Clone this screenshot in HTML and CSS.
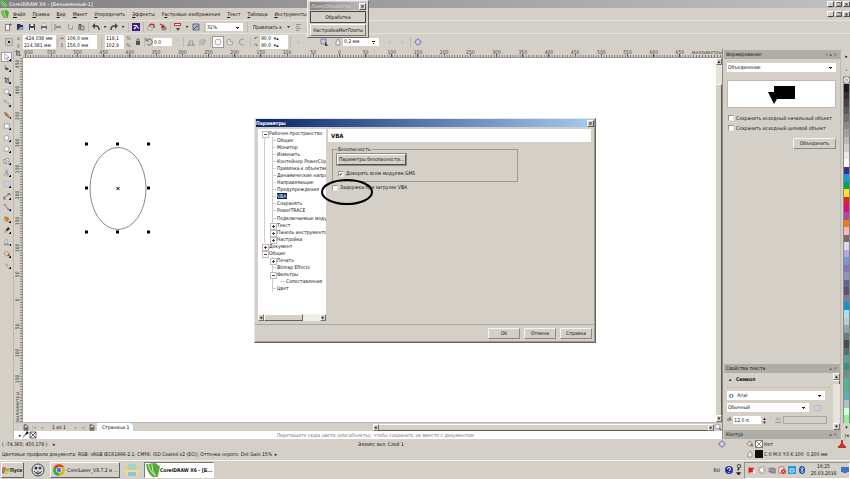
FILE: index.html
```html
<!DOCTYPE html>
<html lang="ru">
<head>
<meta charset="utf-8">
<title>CorelDRAW X6 - [Безымянный-1]</title>
<link rel="stylesheet" href="styles.css">
</head>
<body>
<svg class="sprite" aria-hidden="true">
  <symbol id="corel" viewBox="0 0 12 12"><path d="M0 0h5l7 8v4H6L0 5z" fill="#3f9c35"/><path d="M1 1l9 10M4 1l7 8M1 4l6 7" stroke="#e9f6dc"/></symbol>
  <symbol id="balloon" viewBox="0 0 12 12"><path d="M0 1q1 8 6 11h4l2-9-4-3z" fill="#58a83a"/><path d="M2 1q1 6 6 10M5 1q0 6 3 10" stroke="#e4f3d0" stroke-width=".8" fill="none"/></symbol>
  <symbol id="new" viewBox="0 0 8 8"><path d="M1.500 1.500h4v6h-4z" fill="#fff" stroke="#555" stroke-width=".7"/><path d="M6.500 0v3M5 1.500h3" stroke="#666" stroke-width=".7"/></symbol>
  <symbol id="page" viewBox="0 0 8 8"><path d="M1.500.500h3l2 2v5h-5z" fill="#eee" stroke="#222"/><path d="M4 3v4M2 5h4" stroke="#222"/></symbol>
  <symbol id="open" viewBox="0 0 8 8"><path d="M1 1h3l1 1h2v5H1z" fill="#26324e"/><path d="M2 7l2-3h4L6.500 7z" fill="#8aa0c4"/></symbol>
  <symbol id="save" viewBox="0 0 8 8"><path d="M1 1h6v6H1z" fill="#3b4260"/><path d="M2.500 1h3v2h-3zM2 5h4v2H2z" fill="#e5e8f2"/></symbol>
  <symbol id="print" viewBox="0 0 8 8"><path d="M1 3h6v3H1z" fill="#666"/><path d="M2 1h4v2H2zM2 5h4v2H2z" fill="#f8f8f8" stroke="#888" stroke-width=".4"/></symbol>
  <symbol id="cut" viewBox="0 0 8 8"><path d="M1 1v6M2 3l5 2M2 5l5-2" stroke="#84817b" stroke-width="1" fill="none"/></symbol>
  <symbol id="copy" viewBox="0 0 8 8"><path d="M2.500 1v5h4V3" fill="none" stroke="#9b9892"/></symbol>
  <symbol id="paste" viewBox="0 0 8 8"><path d="M1 2h4v5H1z" fill="#888"/><path d="M4 3h3v4H4z" fill="#ccc" stroke="#444" stroke-width=".6"/><path d="M2 1h2v1H2z" fill="#333"/></symbol>
  <symbol id="undo" viewBox="0 0 8 8"><path d="M2 3h2q3 0 3 4" fill="none" stroke="#454545" stroke-width="1.500"/><path d="M0 3l3-3v6z" fill="#454545"/></symbol>
  <symbol id="redo" viewBox="0 0 8 8"><path d="M6 3H4Q1 3 1 7" fill="none" stroke="#454545" stroke-width="1.500"/><path d="M8 3L5 0v6z" fill="#454545"/></symbol>
  <symbol id="search" viewBox="0 0 8 8"><path d="M0 0h8v8H0z" fill="#3d1c86"/><path d="M1.500 2.500h3l2 3M4 4L2 6" stroke="#fff" stroke-width="1.200" fill="none"/></symbol>
  <symbol id="import" viewBox="0 0 8 8"><path d="M1 4h4v3H1z" fill="#e8e8f0" stroke="#666" stroke-width=".5"/><path d="M2 3q2-3 5-1v3" stroke="#b3272d" fill="none" stroke-width="1.300"/></symbol>
  <symbol id="export" viewBox="0 0 8 8"><path d="M3 4h4v3H3z" fill="#9296a8" stroke="#555" stroke-width=".5"/><path d="M1 1l4 2-1 2M5 3L2 4" stroke="#b3272d" fill="none" stroke-width="1.300"/></symbol>
  <symbol id="launch" viewBox="0 0 8 8"><path d="M0 0h7v3H0z" fill="#c4322c"/><path d="M1 1h5v1H1z" fill="#fff"/><path d="M2 5h4L4 8z" fill="#444"/></symbol>
  <symbol id="welcome" viewBox="0 0 8 8"><path d="M1 1h6v6H1z" fill="#aebed8" stroke="#446" stroke-width=".8"/><path d="M2 6l3-3 1 1" stroke="#446" fill="none"/></symbol>
  <symbol id="list" viewBox="0 0 8 8"><path d="M1 1.500h5M1 3.500h3M1 5.500h5M1 7.500h3" stroke="#8b8882" stroke-width=".8"/></symbol>
  <symbol id="origin" viewBox="0 0 8 8"><path d="M.500.500h7v7h-7z" fill="#c6c4c6" stroke="#889" stroke-width=".6"/><path d="M3 3h2v2H3z" fill="#222"/></symbol>
  <symbol id="lock" viewBox="0 0 8 8"><path d="M2 3h4v4H2z" fill="#555"/><path d="M3 3V1h2v2" fill="none" stroke="#555" stroke-width=".8"/></symbol>
  <symbol id="rotate" viewBox="0 0 8 8"><path d="M2 2a3 3 0 1 1 0 4M1 0v3h3" fill="none" stroke="#555" stroke-width=".8"/></symbol>
  <symbol id="mirror" viewBox="0 0 8 8"><path d="M1 7l2-5v5zM7 7L5 2v5z" fill="#aaa" stroke="#888" stroke-width=".4"/><path d="M0 7.500h8" stroke="#888" stroke-width=".6"/></symbol>
  <symbol id="mirrorv" viewBox="0 0 8 8"><path d="M1 1v7M2 3h5L3 1M2 5h4L3 7" fill="none" stroke="#999" stroke-width=".8"/></symbol>
  <symbol id="circle" viewBox="0 0 8 8"><circle cx="4" cy="4" r="3" fill="#f6f6fb" stroke="#777792" stroke-width=".6"/></symbol>
  <symbol id="pie" viewBox="0 0 8 8"><path d="M4 4h3a3 3 0 1 1-3-3z" fill="#e9e9f2" stroke="#777792" stroke-width=".6"/></symbol>
  <symbol id="arc" viewBox="0 0 8 8"><path d="M6 1.500a3 3 0 1 0 0 5" fill="none" stroke="#8888a0" stroke-width=".8"/></symbol>
  <symbol id="wrap" viewBox="0 0 8 8"><path d="M1 1h5v5H1z" fill="#c9cbe0" stroke="#667" stroke-width=".7"/><path d="M3 6h3M5 3l3 5H5z" fill="#444"/></symbol>
  <symbol id="pen" viewBox="0 0 8 8"><path d="M2 7V4l2-3 2 3v3z" fill="#eee" stroke="#777" stroke-width=".7"/></symbol>
  <symbol id="gear" viewBox="0 0 8 8"><circle cx="4" cy="4" r="2.500" fill="#d8d6e6" stroke="#8f8ab4" stroke-width="1.200"/><path d="M4 0v2M4 6v2M0 4h2M6 4h2" stroke="#8f8ab4"/></symbol>
  <symbol id="dim" viewBox="0 0 8 8"><path d="M2 4h4M4 2v4" stroke="#c3c0b9" stroke-width="1.200"/></symbol>
  <symbol id="t-pick" viewBox="0 0 9 9"><path d="M2 1l5 4H5l1 3-1 .500L4 6 2 7z" fill="#fff" stroke="#667" stroke-width=".6"/></symbol>
  <symbol id="t-shape" viewBox="0 0 9 9"><path d="M2 1q2 3 1 6" stroke="#777" fill="none" stroke-width=".8"/><path d="M3 3l4 3-3 1z" fill="#333"/><path d="M2 4h2v2H2z" fill="#668"/></symbol>
  <symbol id="t-crop" viewBox="0 0 9 9"><path d="M3 1v6h5M1 3h5v5M2 7l5-5" fill="none" stroke="#4b4b52" stroke-width=".8"/></symbol>
  <symbol id="t-zoom" viewBox="0 0 9 9"><path d="M5 5l3 3" stroke="#555" stroke-width="1.400"/><circle cx="4" cy="4" r="2.800" fill="#eef2fc" stroke="#77798c" stroke-width=".7"/></symbol>
  <symbol id="t-free" viewBox="0 0 9 9"><path d="M2 1q-1 3 2 3t3 3" fill="none" stroke="#888" stroke-width=".8"/><path d="M1 1h2v1H1zM6 7h2v1H6z" fill="#888"/></symbol>
  <symbol id="t-brush" viewBox="0 0 9 9"><path d="M1 1q4 0 7 6l-2 1Q4 4 1 3z" fill="#b58366"/><path d="M4 2v4M2 4l5 3" stroke="#765" stroke-width=".8"/></symbol>
  <symbol id="t-rect" viewBox="0 0 9 9"><path d="M1.500 2h5.500v5H1.500z" fill="#fafaff" stroke="#77798c" stroke-width=".7"/></symbol>
  <symbol id="t-ell" viewBox="0 0 9 9"><circle cx="4" cy="4.500" r="2.800" fill="#fafaff" stroke="#77798c" stroke-width=".7"/></symbol>
  <symbol id="t-poly" viewBox="0 0 9 9"><path d="M1 3.500L4 1l3 2.500L6 7H2z" fill="#fafaff" stroke="#77798c" stroke-width=".7"/></symbol>
  <symbol id="t-basic" viewBox="0 0 9 9"><path d="M1 3h3v4H1z" fill="#eee" stroke="#667" stroke-width=".7"/><circle cx="5" cy="3.500" r="2" fill="#f8f8ff" stroke="#667" stroke-width=".7"/><path d="M3 7l2-3 2 3z" fill="#fff" stroke="#667" stroke-width=".6"/></symbol>
  <symbol id="t-text" viewBox="0 0 9 9"><path d="M1 8l3-7 3 7M4 1l1 7M2.500 5.500h3" fill="none" stroke="#888a99" stroke-width=".7"/></symbol>
  <symbol id="t-table" viewBox="0 0 9 9"><path d="M1 2h7v5H1zM1 4.500h7M3.500 2v5M5.800 2v5" fill="#fff" stroke="#8688a0" stroke-width=".6"/></symbol>
  <symbol id="t-dim" viewBox="0 0 9 9"><path d="M1 7l6-5M1 5v3h2M5 2h3v2" fill="none" stroke="#555" stroke-width=".9"/></symbol>
  <symbol id="t-conn" viewBox="0 0 9 9"><path d="M2 2l4 5" stroke="#666" stroke-width=".8"/><path d="M1 1h2v2H1zM5 6h2v2H5z" fill="#889"/></symbol>
  <symbol id="t-blend" viewBox="0 0 9 9"><path d="M1 2l3-1 3 3v4H4L1 6z" fill="#dd9b5c"/><path d="M2 3l4 1-2 3" fill="none" stroke="#8c4f23" stroke-width=".8"/></symbol>
  <symbol id="t-drop" viewBox="0 0 9 9"><path d="M1 8l1-3 2-1 1 1-1 2z" fill="#e29146"/><path d="M3 4l3-3 2 2-3 3z" fill="#4b3328"/></symbol>
  <symbol id="dropper" viewBox="0 0 8 8"><path d="M1 7l1-2 2-2 1 1-2 2z" fill="#999"/><path d="M4 3l2-3 2 2-3 2z" fill="#222"/></symbol>
  <symbol id="t-out" viewBox="0 0 9 9"><path d="M2 6V4l2-3 1 3v2z" fill="#e8e8f0" stroke="#778" stroke-width=".6"/><path d="M1 7.500h7" stroke="#778"/></symbol>
  <symbol id="t-fill" viewBox="0 0 9 9"><path d="M1 4l3-3 3 3-3 3z" fill="#d8d3cc" stroke="#665" stroke-width=".7"/><path d="M6 4q3 1 1 4L5 6z" fill="#b9542d"/></symbol>
  <symbol id="t-ifill" viewBox="0 0 9 9"><path d="M1 3l3-2 2 3-2 3z" fill="#e6c28d"/><path d="M3 3l3 4" stroke="#776" stroke-width=".8"/></symbol>
</svg>

<div class="app">
  <header class="titlebar">
    <svg class="i8"><use href="#corel"/></svg>
    <h1>CorelDRAW X6 - [Безымянный-1]</h1>
    <div class="winbtns"><button aria-label="Свернуть">_</button><button aria-label="Восстановить">❐</button><button aria-label="Закрыть">×</button></div>
  </header>
  <nav class="menubar">
    <svg class="i8"><use href="#balloon"/></svg>
    <a href="#"><u>Ф</u>айл</a><a href="#"><u>П</u>равка</a><a href="#"><u>В</u>ид</a><a href="#"><u>М</u>акет</a><a href="#"><u>У</u>порядочить</a><a href="#"><u>Э</u>ффекты</a><a href="#">Р<u>а</u>стровые изображения</a><a href="#"><u>Т</u>екст</a><a href="#"><u>Т</u>аблица</a><a href="#"><u>И</u>нструменты</a>
    <div class="winbtns"><button aria-label="Свернуть документ">_</button><button aria-label="Восстановить документ">❐</button><button aria-label="Закрыть документ">×</button></div>
  </nav>
  <div class="bar std">
    <button aria-label="Создать"><svg><use href="#new"/></svg></button>
    <button aria-label="Открыть"><svg><use href="#open"/></svg></button>
    <button aria-label="Сохранить"><svg><use href="#save"/></svg></button>
    <button aria-label="Печать"><svg><use href="#print"/></svg></button>
    <i class="sep"></i>
    <button aria-label="Вырезать"><svg><use href="#cut"/></svg></button>
    <button aria-label="Копировать"><svg><use href="#copy"/></svg></button>
    <button aria-label="Вставить"><svg><use href="#paste"/></svg></button>
    <i class="sep"></i>
    <button aria-label="Отменить"><svg><use href="#undo"/></svg></button><i class="dd"></i>
    <button aria-label="Повторить"><svg><use href="#redo"/></svg></button><i class="dd"></i>
    <i class="sep"></i>
    <button aria-label="Поиск содержимого"><svg><use href="#search"/></svg></button>
    <i class="sep"></i>
    <button aria-label="Импорт"><svg><use href="#import"/></svg></button>
    <button aria-label="Экспорт"><svg><use href="#export"/></svg></button>
    <i class="sep"></i>
    <button aria-label="Запуск приложений"><svg><use href="#launch"/></svg></button><i class="dd"></i>
    <button aria-label="Экран приветствия"><svg><use href="#welcome"/></svg></button>
    <i class="sep"></i>
    <select aria-label="Масштаб"><option>31%</option></select>
    <i class="sep"></i>
    <button>Привязать к</button><i class="dd"></i>
    <button aria-label="Параметры"><svg><use href="#list"/></svg></button>
  </div>
  <div class="bar prop">
    <button aria-label="Начало координат"><svg><use href="#origin"/></svg></button>
    <div class="pair"><label for="px">x:</label><input id="px" value="-424,038 мм"><label for="py">y:</label><input id="py" value="214,381 мм"></div>
    <i class="sep"></i>
    <div class="pair"><label for="pw">↔</label><input id="pw" value="106,0 мм"><label for="ph">↕</label><input id="ph" value="156,0 мм"></div>
    <i class="sep"></i>
    <div class="pair after"><input id="sx" value="118,1"><label for="sx">%</label><input id="sy" value="102,9"><label for="sy">%</label></div>
    <button aria-label="Сохранять пропорции"><svg><use href="#lock"/></svg></button>
    <i class="sep"></i>
    <svg><use href="#rotate"/></svg><input aria-label="Угол поворота" value="0,0"><span class="muted">°</span>
    <i class="sep"></i>
    <button aria-label="Отразить по горизонтали"><svg><use href="#mirror"/></svg></button>
    <button aria-label="Отразить по вертикали"><svg><use href="#mirrorv"/></svg></button>
    <i class="sep"></i>
    <button class="pressed" aria-label="Эллипс"><svg><use href="#circle"/></svg></button>
    <button aria-label="Сектор"><svg><use href="#pie"/></svg></button>
    <button aria-label="Дуга"><svg><use href="#arc"/></svg></button>
    <i class="sep"></i>
    <div class="pair"><label for="a1">↶</label><input id="a1" value="90,0  ▾▴"><label for="a2">↷</label><input id="a2" value="90,0  ▾▴"></div>
    <i class="sep"></i>
    <svg><use href="#dim"/></svg><span></span>
    <button aria-label="Обтекание текстом"><svg><use href="#wrap"/></svg></button><span></span>
    <svg><use href="#pen"/></svg>
    <select aria-label="Толщина абриса"><option>0,2 мм</option></select><span></span>
    <svg><use href="#dim"/></svg><svg><use href="#dim"/></svg>
    <i class="sep"></i>
    <button aria-label="Преобразовать в кривую"><svg><use href="#gear"/></svg></button>
  </div>

  <main class="main">
    <aside class="toolbox"><div class="tools" id="tools"></div></aside>
    <section class="doc">
      <div class="corner"><svg class="i8"><use href="#t-crop"/></svg></div>
      <div class="hruler"><div class="hcells" id="hcells"></div><span>миллиметры</span></div>
      <div class="vruler"><div class="vcells" id="vcells"></div><span>миллиметры</span></div>
      <div class="canvas">
        <svg class="drawing" width="132" height="200" viewBox="23 58 132 200">
          <ellipse cx="118" cy="188.500" rx="28" ry="41" fill="none" stroke="#555" stroke-width=".7"/>
          <path d="M85 142.500h3v3h-3zM116 142.500h3v3h-3zM147 142.500h3v3h-3zM85 186.500h3v3h-3zM147 186.500h3v3h-3zM85 230.500h3v3h-3zM116 230.500h3v3h-3zM147 230.500h3v3h-3z"/>
          <path d="M116.500 187l3 3m0-3l-3 3" stroke="#000"/>
        </svg>
      </div>
      <div class="vscroll"><button aria-label="Вверх">▴</button><i></i><b></b><button aria-label="Вниз">▾</button></div>
      <div class="pagebar">
        <button aria-label="Добавить страницу в начало"><svg><use href="#page"/></svg></button><button class="muted" aria-label="Первая">|◂</button><button class="muted" aria-label="Предыдущая">◂</button>
        <span>1 из 1</span>
        <button class="muted" aria-label="Следующая">▸</button><button class="muted" aria-label="Последняя">▸|</button><button aria-label="Добавить страницу в конец"><svg><use href="#page"/></svg></button>
        <a class="tab" href="#">Страница 1</a>
        <div class="hscroll"><button aria-label="Влево">◂</button><b></b><button aria-label="Вправо">▸</button><svg class="i8"><use href="#t-zoom"/></svg></div>
      </div>
      <div class="docpalette"><span>▸</span><svg class="i8"><use href="#dropper"/></svg><svg class="i8" viewBox="0 0 8 8"><path d="M1 1h6v6H1zM1 1l6 6M7 1L1 7" fill="none" stroke="#222" stroke-width=".7"/></svg><p>Перетащите сюда цвета (или объекты), чтобы сохранить их вместе с документом</p></div>
    </section>
    <aside class="docker">
      <h2>Формирование <span>» ▴ ×</span></h2>
      <div class="shaping">
        <select aria-label="Операция"><option>Объединение</option></select>
        <div class="preview"><svg width="28" height="20" viewBox="0 0 28 20"><path d="M6 2h21v13H9l-3 5-6-12h6z"/></svg></div>
        <label><input type="checkbox">Сохранить исходный начальный объект</label>
        <label><input type="checkbox">Сохранить исходный целевой объект</label>
        <button class="btn">Объединить</button>
      </div>
      <h2>Свойства текста <span>▴ ×</span></h2>
      <div class="textprops">
        <div class="fields">
          <h3>▴ &nbsp; Символ</h3>
          <div class="font"><em>O</em><select aria-label="Шрифт"><option>Arial</option></select></div>
          <div class="row"><select aria-label="Начертание"><option>Обычный</option></select><svg class="i8"><use href="#t-table"/></svg></div>
          <div class="row size"><label for="fs">ıA</label><input id="fs" value="12,0 п."><span class="spin">▴▾</span><label for="kern" class="muted kern">AV</label><input id="kern" class="off" value="" disabled></div>
        </div>
        <div class="vscroll small"><button aria-label="Вверх">▴</button><b></b><i></i><button aria-label="Вниз">▾</button></div>
      </div>
      <h2>Контур <span>▴ ×</span></h2>
    </aside>
    <aside class="palette">
      <button aria-label="Меню палитры">▸</button><button class="muted" aria-label="Прокрутить вверх">▴</button>
      <svg viewBox="0 0 8 8"><path d="M.500.500h7v7h-7zM1 1l6 6M7 1L1 7" fill="#fff" stroke="#333" stroke-width=".6"/></svg>
      <div class="swatches" id="swatches"></div>
      <button aria-label="Прокрутить вниз">▾</button><button aria-label="Развернуть">|◂</button>
    </aside>
  </main>

  <footer class="status">
    <span>( -74,365; 450,178 ) &nbsp; &nbsp;▸</span>
    <span>Эллипс вкл. Слой 1</span>
    <svg class="i8"><use href="#gear"/></svg>
    <div class="paint"><svg class="i8"><use href="#t-fill"/></svg><svg class="i8" viewBox="0 0 8 8"><path d="M.500.500h7v7h-7zM1 1l6 6M7 1L1 7" fill="#fff" stroke="#333" stroke-width=".6"/></svg><span>Нет</span></div>
    <svg class="i8 alert" viewBox="0 0 8 8"><path d="M3 0h2v3l2 3H1l2-3zM0 6h8v2H0z" fill="#c2332f"/></svg>
    <span class="profiles">Цветовые профили документа: RGB: sRGB IEC61966-2.1; CMYK: ISO Coated v2 (ECI); Оттенки серого: Dot Gain 15% &nbsp;▸</span>
    <div class="paint second"><svg class="i8"><use href="#pen"/></svg><i class="ink"></i><span>C:0 M:0 Y:0 K:100 &nbsp;0,200 мм</span></div>
  </footer>

  <footer class="taskbar">
    <button class="start"><svg class="i8" viewBox="0 0 8 8"><path d="M0 2q2-2 4 0l-1 3Q2 4 0 5z" fill="#e0623a"/><path d="M4 2q2 1 4 0L7 5Q5 6 3 5z" fill="#8cb93d"/><path d="M0 5q2-1 3 0L2 8Q1 7 0 7z" fill="#4d7fd0"/><path d="M3 5q2 1 4 0L6 8Q4 9 2 8z" fill="#e8c23a"/></svg>Пуск</button>
    <svg class="i14" viewBox="0 0 14 14"><circle cx="7" cy="7" r="6" fill="#d8dce0" stroke="#444"/><circle cx="5" cy="5" r="1.500" fill="#333"/><circle cx="9" cy="5" r="1.500" fill="#444"/><path d="M3 8q4 5 8 0M5 9v2M7 8v4M9 9v2" stroke="#333" stroke-width=".8" fill="none"/></svg>
    <button class="task"><svg class="i12" viewBox="0 0 12 12"><circle cx="6" cy="6" r="6" fill="#e2b422"/><path d="M1 3a6 6 0 0 1 10 0H6L4 7z" fill="#d93f2f"/><path d="M1 3a6 6 0 0 0 4 9l3-5H4z" fill="#3ba755"/><circle cx="6" cy="6" r="2.800" fill="#fff"/><circle cx="6" cy="6" r="2.200" fill="#3f79d8"/></svg>CorelLaser_V8.7.2 и ...</button>
    <svg class="i14" viewBox="0 0 14 14"><path d="M1 2h4l1 1h7v10H1z" fill="#ecd070"/><path d="M3 1h8v7H3z" fill="#a9d0c4"/><path d="M1 7h12v6H1z" fill="#f1dc8a"/><path d="M3 9h8v4H3z" fill="#8cc4dc"/></svg>
    <button class="task active"><svg class="i14"><use href="#balloon"/></svg>CorelDRAW X6 - [Б...</button>
    <div class="lang">RU</div>
    <svg class="i8 help" viewBox="0 0 8 8"><circle cx="4" cy="4" r="4" fill="#2634a8"/><path d="M2.500 3q0-1.500 1.500-1.500T5.500 3 4 4.800M4 6v1" stroke="#fff" fill="none"/></svg>
    <svg class="i8 mini" viewBox="0 0 8 14"><circle cx="4" cy="2.500" r="2" fill="none" stroke="#333"/><path d="M4 4v3H2M1 10h5l-2.500 3z" stroke="#333" stroke-width=".6"/></svg>
    <div class="tray">
      <svg class="i8" viewBox="0 0 8 8"><path d="M1 1v7M1 2h5L4 4l2 2H1z" fill="#d22" stroke="#d22" stroke-width=".6"/><path d="M5 5h2v2H5z" fill="#fff"/></svg>
      <svg class="i8" viewBox="0 0 8 8"><circle cx="4" cy="4" r="3.500" fill="#c8c6c2" stroke="#aaa"/><path d="M2 3h1l2-2v6L3 5H2z" fill="#fff"/></svg>
      <svg class="i8" viewBox="0 0 8 8"><path d="M1 2h5v4H1zM3 3h5v4H3z" fill="#aab" stroke="#667" stroke-width=".6"/></svg>
      <svg class="i8" viewBox="0 0 8 8"><path d="M1 1h5v6H1z" fill="#eee" stroke="#b55" stroke-width=".7"/><circle cx="5.500" cy="5.500" r="2.500" fill="#d8342a"/><path d="M4.500 4.500l2 2m0-2l-2 2" stroke="#fff" stroke-width=".7"/></svg>
      <svg class="i8" viewBox="0 0 8 8"><path d="M0 0h8v8H0z" fill="#2b98d8"/><path d="M2 3h4v3H2z" fill="none" stroke="#d8f0ff"/></svg>
      <svg class="i8" viewBox="0 0 8 8"><ellipse cx="4" cy="4" rx="3" ry="4" fill="#1650a8"/><path d="M2.500 2.500l3 3L4 7V1l1.500 1.500-3 3" stroke="#fff" fill="none" stroke-width=".6"/></svg>
      <time>16:25<br>25.03.2016</time>
      <svg class="i8" viewBox="0 0 8 8"><path d="M0 1h8v5H0zM2 6h4v1H2z" fill="#3f74c8"/></svg>
    </div>
  </footer>
</div>

<section class="macro" aria-label="Макросы">
  <header>ЛазерОбработка<button aria-label="Закрыть">×</button></header>
  <button class="default">Обработка</button>
  <button>НастройкаМатПлаты</button>
</section>

<section class="dialog" role="dialog" aria-label="Параметры">
  <header>Параметры<button aria-label="Закрыть">×</button></header>
  <div class="dlgbody">
    <nav class="treepane">
      <ul class="tree">
        <li class="l0 open">Рабочее пространство</li>
        <li>Общие</li><li>Монитор</li><li>Изменить</li><li>Контейнер PowerClip</li><li>Привязка к объектам</li><li>Динамические направляющие</li><li>Направляющие</li><li>Предупреждения</li>
        <li><mark>VBA</mark></li><li>Сохранять</li><li>PowerTRACE</li><li>Подключаемые модули</li>
        <li class="closed">Текст</li><li class="closed">Панель инструментов</li><li class="closed">Настройка</li>
        <li class="l0 closed">Документ</li>
        <li class="l0 open">Общие</li>
        <li class="closed tail">Печать</li><li class="tail">Bitmap Effects</li><li class="open tail">Фильтры</li><li class="l2 tail">Сопоставления</li><li class="tail">Цвет</li>
      </ul>
      <div class="treescroll"><button aria-label="Влево">◂</button><b></b><i></i><button aria-label="Вправо">▸</button></div>
    </nav>
    <div class="pane">
      <h2>VBA</h2>
      <fieldset>
        <legend>Безопасность</legend>
        <button class="btn strong">Параметры безопасности...</button>
        <label><input type="checkbox" checked>Доверять всем модулям GMS</label>
      </fieldset>
      <label class="delay"><input type="checkbox">Задержка при загрузке VBA</label>
    </div>
  </div>
  <footer><button class="btn">OK</button><button class="btn">Отмена</button><button class="btn">Справка</button></footer>
  <svg class="mark" width="54" height="28" viewBox="0 0 54 28" aria-hidden="true"><ellipse cx="27" cy="14" rx="25" ry="12" fill="none" stroke="#000" stroke-width="2"/></svg>
</section>
<script src="script.js"></script>
</body>
</html>
```
FILE: styles.css
```css
:root {
  --face: #d4d0c8;
  --shade: #8c8982;
  --light: #f6f4ef;
  --head: #b0ada6;
  --line: linear-gradient(#ccc, #ccc);
}
* { box-sizing: border-box; margin: 0; padding: 0; }
html, body { height: 100%; overflow: hidden; }
body {
  position: relative;
  font: 5px/7px "DejaVu Sans Condensed", "DejaVu Sans", sans-serif;
  color: #111;
  background: var(--face);
}
button, input, select { font: inherit; color: inherit; border: 0; background: none; border-radius: 0; min-width: 0; appearance: none; white-space: nowrap; }
h1, h2, h3 { font: inherit; }
a { color: inherit; text-decoration: none; }
svg { display: block; flex: none; }
i { font-style: normal; }
.sprite { position: absolute; width: 0; height: 0; }
.i8 { width: 8px; height: 8px; }
.i12 { width: 12px; height: 12px; }
.i14 { width: 14px; height: 14px; }
.muted, button.muted { color: #9b978f; }

.app { height: 100%; display: flex; flex-direction: column; }

.titlebar { display: flex; align-items: center; height: 8px; gap: 1px; color: #d9d9d9; background: linear-gradient(90deg, #808080, #c0c0c0); }
.titlebar h1 { font-weight: bold; }
.winbtns { display: flex; margin-left: auto; gap: 1px; }
.winbtns button { width: 7px; height: 6px; line-height: 5px; color: #000; background: var(--face); border: 1px solid; border-color: #fff #555 #555 #fff; display: grid; place-items: center; font-weight: bold; }

.menubar { display: flex; align-items: center; height: 12px; gap: 7px; padding-left: 1px; }
.menubar a:first-of-type { margin-left: -3px; }

.bar { display: grid; align-items: center; padding-left: 2px; border-top: 1px solid #e6e3dc; }
.bar > * { justify-self: center; }
.bar svg { width: 8px; height: 8px; }
.bar input, .bar select { justify-self: stretch; height: 8px; background: #fff; padding-left: 1px; width: 100%; }
.bar select, .docker select {
  background: linear-gradient(#222, #222) right 4px center / 3px 1px no-repeat, linear-gradient(#222, #222) right 5px top 5px / 1px 1px no-repeat, #fff;
}
.std { height: 13px; grid-template-columns: 12px 12px 12px 12px 2px 12px 12px 10px 4px 12px 6px 12px 6px 4px 12px 3px 12px 12px 3px 12px 6px 12px 4px 37px 8px 33px 9px 11px; }
.prop { height: 16px; grid-template-columns: 13px 41px 2px 39px 8px 28px 10px 2px 8px 19px 10px 3px 12px 12px 2px 13px 12px 12px 4px 36px 4px 12px 14px 12px 3px 10px 36px 5px 12px 12px 4px 12px; }
.sep { width: 1px; height: 10px; background: #bdb9b1; }
.dd { width: 3px; height: 2px; background: #333; clip-path: polygon(0 0, 100% 0, 50% 100%); }
.pair { justify-self: stretch; display: grid; grid-template-columns: 8px 1fr; grid-auto-rows: 7px; }
.pair.after { grid-template-columns: 1fr 9px; }
.pair label { justify-content: center; color: #555; }
.bar .pair input { height: 7px; }
.pressed { padding: 1px; background: #fff; border: 1px solid #999; }

.main { flex: 1; min-height: 0; display: grid; grid-template-columns: 14px 1fr 118px 9px; }
.toolbox { border-right: 1px solid #bcb8b0; padding-top: 2px; }
.tools { display: grid; grid-auto-rows: 1fr; height: 220px; justify-items: center; align-items: center; }
.tools button { width: 11px; height: 10px; padding-left: 1px; border: 1px solid transparent; background: linear-gradient(135deg, transparent 50%, #111 50%) right bottom / 2px 2px no-repeat; }
.tools button.active { background-color: #fff; border-color: #999; }
.tools svg { width: 8px; height: 8px; }

.doc { display: grid; grid-template-columns: 9px 1fr 6px; grid-template-rows: 9px 1fr 9px 8px; min-width: 0; min-height: 0; border-right: 1px solid #8b8882; }
.hruler { grid-column: 2 / 4; display: flex; overflow: hidden; border-bottom: 1px solid #99958d; color: #444; }
.hcells { display: grid; grid-template-columns: repeat(26, 1fr); flex: 1; margin-left: -11px; }
.hcells span { text-align: center; line-height: 6px; background: linear-gradient(90deg, #77746e 1px, transparent 1px) 0 100% / 10% 2px repeat-x, linear-gradient(#55524d, #55524d) 50% 100% / 1px 3px no-repeat; }
.hcells span:first-child { padding-left: 7px; }
.hruler > span { width: 29px; text-align: right; line-height: 6px; background: linear-gradient(90deg, #77746e 1px, transparent 1px) 0 100% / 3px 2px repeat-x; direction: rtl; }
.vruler { display: flex; flex-direction: column; overflow: hidden; border-right: 1px solid #99958d; color: #444; }
.vcells { display: grid; grid-template-rows: repeat(13, 1fr); height: 341px; flex: none; margin-top: -7px; }
.vcells span, .vruler > span { writing-mode: vertical-rl; transform: rotate(180deg); text-align: center; line-height: 6px; width: 8px; padding-left: 2px; background: linear-gradient(#77746e 1px, transparent 1px) 0 0 / 2px 10% repeat-y; }
.vruler > span { flex: 1; text-align: left; }
.canvas { background: #fff; overflow: hidden; }

.vscroll { display: flex; flex-direction: column; background: #e6e3dc; }
.vscroll button, .hscroll button, .treescroll button { width: 6px; height: 7px; line-height: 5px; flex: none; color: #000; background: var(--face); border: 1px solid; border-color: #fff #77746e #77746e #fff; display: grid; place-items: center; }
.vscroll i { height: 19px; }
.vscroll b { flex: 1; background: var(--face); border-right: 1px solid #5c5953; border-top: 1px solid #fff; }
.pagebar { grid-column: 1 / 4; display: flex; align-items: center; padding-left: 9px; gap: 2px; border-top: 1px solid #bcb8b0; }
.pagebar > button { width: 6px; }
.pagebar > button svg { width: 6px; height: 7px; }
.pagebar > span { padding: 0 5px; }
.tab { align-self: stretch; background: #fff; padding: 0 4px 0 5px; line-height: 8px; border-top-right-radius: 4px; }
.hscroll { width: 50%; margin-left: auto; display: flex; align-items: center; }
.hscroll b { flex: 1; height: 7px; border-bottom: 1px solid #5c5953; border-top: 1px solid #fff; }
.docpalette { grid-column: 1 / 4; background: #fff; display: flex; align-items: center; padding: 0 9px 0 5px; }
.docpalette p { flex: 1; text-align: center; font-style: italic; color: #777; }

.docker { display: flex; flex-direction: column; padding: 1px 0 0 1px; border-right: 1px solid #bcb8b0; }
.docker h2 { display: flex; height: 9px; align-items: center; padding: 0 3px 0 2px; background: var(--head); flex: none; }
.docker h2 span { margin-left: auto; display: block; white-space: pre; color: #555; }
.docker select { height: 9px; padding-left: 1px; width: 100%; }
.shaping { flex: 1; display: flex; flex-direction: column; padding: 4px 4px 0 3px; }
.preview { height: 28px; margin: 8px 0 5px; background: #fff; border: 1px solid #bcb8b0; display: grid; place-items: center; }
label { display: flex; align-items: center; }
input[type="checkbox"] { width: 6px; height: 6px; background: #fff; border: 1px solid; border-color: #96928a #e8e5de #e8e5de #96928a; flex: none; display: grid; place-items: center; }
input[type="checkbox"]:checked::after { content: "✔"; font-size: 5px; line-height: 5px; color: #000; }
.shaping label { height: 10px; gap: 2px; padding-left: 1px; white-space: nowrap; }
.btn { height: 11px; padding: 0 4px; background: var(--face); border: 1px solid; border-color: var(--light) var(--shade) var(--shade) var(--light); text-align: center; }
.shaping .btn { width: 43px; align-self: flex-end; margin-top: 5px; }
.textprops { display: flex; height: 57px; }
.fields { flex: 1; padding: 3px 2px 0 3px; display: flex; flex-direction: column; gap: 3px; min-width: 0; }
.fields h3 { font-weight: bold; height: 12px; padding-left: 2px; border-bottom: 1px solid #c4c0b8; }
.font { display: flex; align-items: center; height: 9px; background: #fff; margin-right: 6px; }
.font em { padding: 0 3px 0 2px; font: italic bold 6px/8px "Liberation Serif", serif; color: #124c6e; }
.row { display: flex; align-items: center; height: 9px; gap: 5px; padding-right: 4px; }
.row select { width: 82px; flex: none; }
.size { gap: 2px; }
.size input { width: 28px; height: 8px; background: #fff; padding-left: 1px; }
.size .off { background: var(--face); border: 1px solid #aaa69e; flex: 1; }
.kern { margin-left: 6px; text-decoration: underline; }
.spin { width: 4px; line-height: 4px; overflow-wrap: anywhere; }
.vscroll.small { width: 7px; }
.vscroll.small button { width: 7px; }
.vscroll.small b { flex: 0 0 4px; }
.vscroll.small i { flex: 1; }

.palette { display: flex; flex-direction: column; align-items: stretch; padding: 1px 0 0 2px; }
.palette > button { height: 8px; flex: none; }
.palette > button:first-child { height: 12px; }
.palette > button:nth-child(2) { height: 14px; }
.palette > svg { height: 8px; width: 7px; }
.swatches { flex: 1; display: grid; grid-auto-rows: 1fr; }
.swatches i { border: solid #888; border-width: 0 1px; }

.status { flex: none; height: 21px; display: grid; grid-template-columns: 356px 1fr 28px 92px 12px; grid-template-rows: 10px 10px; align-items: center; padding-left: 2px; white-space: nowrap; }
.paint { display: flex; align-items: center; gap: 1px; height: 9px; }
.paint.second { grid-column: 4; }
.profiles { grid-column: 1 / 4; }
.ink { width: 8px; height: 8px; background: #111; }

.taskbar { flex: none; height: 19px; display: flex; align-items: center; padding-left: 1px; border-top: 1px solid #f4f2ed; }
.taskbar button { display: flex; align-items: center; height: 16px; background: var(--face); border: 1px solid; border-color: #fff #66635d #66635d #fff; }
.start { width: 23px; font-weight: bold; margin-right: 7px; }
.taskbar .task { width: 70px; gap: 2px; padding-left: 2px; margin: 0 5px; }
.taskbar .active { background: #fff; border-color: #777 #fff #fff #777; font-weight: bold; }
.taskbar .task.active { gap: 0; padding-left: 1px; }
.lang { margin-left: auto; margin-right: 5px; }
.mini { height: 12px; margin-left: 2px; margin-right: 1px; }
.tray { display: flex; align-items: center; gap: 2px; height: 17px; width: 106px; padding-left: 3px; border: 1px solid; border-color: #96928a #fff #fff #96928a; }
.tray time { flex: 1; text-align: center; line-height: 7px; }

.macro { position: absolute; left: 307px; top: 0; width: 62px; display: flex; flex-direction: column; gap: 1px; padding: 1px 2px; background: var(--face); border: 1px solid; border-color: #eee #66635d #66635d #eee; }
.macro header { display: flex; align-items: center; height: 8px; padding-left: 1px; color: #d5d5d5; background: linear-gradient(90deg, #858585, #bdbdbd); }
.macro > button { height: 12px; border: 1px solid; border-color: #fff #77746e #77746e #fff; text-align: center; }
.macro > .default { border-color: #444; }
.macro header button, .dialog header button { margin-left: auto; width: 7px; height: 7px; line-height: 5px; color: #000; background: var(--face); border: 1px solid; border-color: #fff #555 #555 #fff; display: grid; place-items: center; font-weight: bold; }

.dialog { position: absolute; left: 254px; top: 118px; width: 342px; height: 225px; display: flex; flex-direction: column; background: var(--face); border: 1px solid; border-color: #e8e5de #66635d #66635d #e8e5de; box-shadow: inset -1px -1px #a09c94; }
.dialog > header { display: flex; align-items: center; height: 8px; margin: 0 1px; flex: none; font-weight: bold; color: #fff; background: linear-gradient(90deg, #0a246a, #a6caf0); }
.dlgbody { flex: 1; min-height: 0; display: flex; gap: 2px; padding: 2px 4px 3px 3px; border-bottom: 1px solid #aaa69e; }
.treepane { width: 68px; background: #fff; display: flex; flex-direction: column; justify-content: space-between; overflow: hidden; }
.tree { list-style: none; display: grid; grid-auto-rows: 1fr; height: 163px; padding-top: 1px; }
.tree li { position: relative; padding-left: 19px; white-space: nowrap; background: var(--line) 6px 0 / 1px 100% no-repeat, var(--line) 14px 0 / 1px 100% no-repeat, var(--line) 14px 3px / 4px 1px no-repeat; }
.tree .tail { background: var(--line) 14px 0 / 1px 100% no-repeat, var(--line) 14px 3px / 4px 1px no-repeat; }
.tree .l0 { padding-left: 11px; background: var(--line) 6px 3px / 4px 1px no-repeat; }
.tree .l2 { padding-left: 28px; background: var(--line) 14px 0 / 1px 100% no-repeat, var(--line) 22px 3px / 5px 1px no-repeat; }
.tree .open::before, .tree .closed::before { content: ""; position: absolute; left: 12px; top: 1px; width: 5px; height: 5px; background: linear-gradient(#444, #444) center / 3px 1px no-repeat, #fff; border: 1px solid #bbb; }
.tree .closed::before { background: linear-gradient(#444, #444) center / 3px 1px no-repeat, linear-gradient(#444, #444) center / 1px 3px no-repeat, #fff; }
.tree .l0::before { left: 4px; }
.tree mark { color: #fff; background: #0a246a; padding: 0 1px 0 0; }
.treescroll { display: flex; height: 7px; background: #efede8; }
.treescroll b { width: 39px; border: 1px solid; border-color: #fff #66635d #66635d #fff; background: var(--face); }
.treescroll i { flex: 1; }
.pane { flex: 1; }
.pane h2 { height: 13px; padding-left: 3px; font: bold 6px/13px "DejaVu Sans Condensed", "DejaVu Sans", sans-serif; background: #fff; }
fieldset { width: 186px; height: 36px; margin: 4px 0 0 4px; padding: 1px 4px; border: 1px solid #9c9890; }
legend { padding: 0 1px; }
.btn.strong { border-color: #fff #55524d #55524d #fff; box-shadow: 0 0 0 1px #8c8982; width: 69px; padding: 0; display: block; }
.pane label { gap: 2px; margin-top: 5px; padding-left: 1px; }
.pane .delay { padding-left: 4px; margin-top: 2px; gap: 2px; }
.dialog > footer { display: flex; justify-content: flex-end; gap: 4px; padding: 3px 3px 3px 0; }
.dialog > footer .btn { width: 32px; }
.mark { position: absolute; left: 65px; top: 59px; }
```
FILE: script.js
```js
function fill(id, items, make) {
  const host = document.getElementById(id);
  items.forEach((item, n) => host.append(make(item, n)));
}

function label(value) {
  const span = document.createElement('span');
  span.textContent = value;
  return span;
}

const horizontal = Array.from({ length: 26 }, (_, n) => Math.abs(600 - n * 50));
const vertical = Array.from({ length: 13 }, (_, n) => Math.abs(450 - n * 50));
fill('hcells', horizontal, label);
fill('vcells', vertical, label);

const tools = [
  ['t-pick', 'Указатель'], ['t-shape', 'Форма'], ['t-crop', 'Обрезка'], ['t-zoom', 'Масштаб'],
  ['t-free', 'Свободная форма'], ['t-brush', 'Интеллектуальная заливка'], ['t-rect', 'Прямоугольник'],
  ['t-ell', 'Эллипс'], ['t-poly', 'Многоугольник'], ['t-basic', 'Основные фигуры'], ['t-text', 'Текст'],
  ['t-table', 'Таблица'], ['t-dim', 'Размер'], ['t-conn', 'Соединитель'], ['t-blend', 'Перетекание'],
  ['t-drop', 'Пипетка'], ['t-out', 'Абрис'], ['t-fill', 'Заливка'], ['t-ifill', 'Интерактивная заливка']
];
fill('tools', tools, ([icon, name], n) => {
  const button = document.createElement('button');
  button.setAttribute('aria-label', name);
  if (n === 0) button.className = 'active';
  button.innerHTML = `<svg><use href="#${icon}"/></svg>`;
  return button;
});

const colours = ('1a1a1a 303030 464646 5c5c5c 727272 888888 a0a0a0 b8b8b8 d0d0d0 e8e8e8 ffffff 3a2a9a 1a9ad6 00a550 ' +
  'ffe51a e3261c d6108c b04a94 ea8010 ffb4bc 806a66 dcd8f4 b4a8e0 7898d0 8872c4 9490b4 5a6894 585470 7c7c9c 1094cc ' +
  'a8e0f8 b8ccd4 94a4ac 6c7c80 484c50 4c7470 609c94 3c8c80 70908c 50b4a0 5cb088 58b0b8 a8c8bc d0ffe0 90f098').split(' ');
fill('swatches', colours, colour => {
  const swatch = document.createElement('i');
  swatch.style.background = '#' + colour;
  return swatch;
});
```
